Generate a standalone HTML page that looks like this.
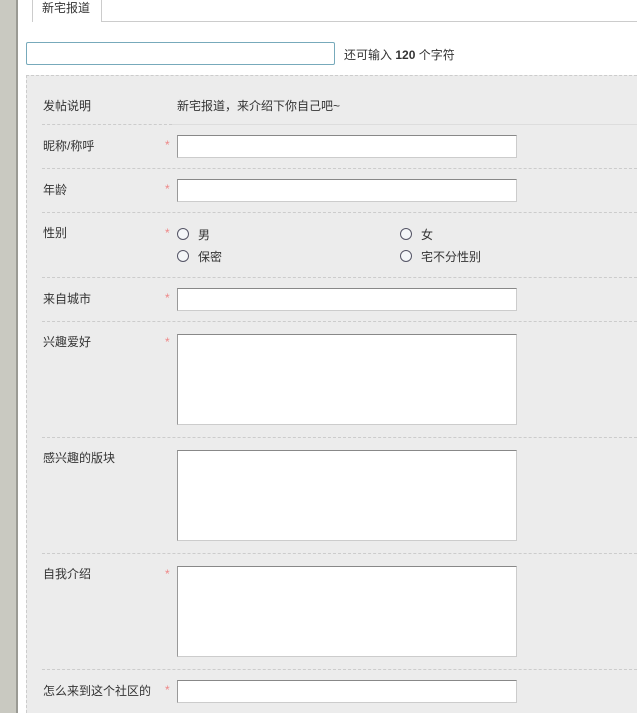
<!DOCTYPE html>
<html><head><meta charset="utf-8"><style>
body{margin:0;width:637px;height:713px;overflow:hidden;background:#fff;font:12px "Liberation Sans","Noto Sans CJK SC",sans-serif;color:#333;position:relative}
.a{position:absolute}
.lab{position:absolute;left:43px}
.star{position:absolute;left:165px;color:#e88;font-size:12px}
.in{position:absolute;left:177px;width:338px;height:21px;background:#fff;border:1px solid #ccc;border-top-color:#888;border-left-color:#999}
.ta{position:absolute;left:177px;width:338px;height:89px;background:#fff;border:1px solid #ccc;border-top-color:#888;border-left-color:#999}
.sep{position:absolute;left:42px;right:0;border-top:1px dashed #ccc}
.r{position:absolute;width:10px;height:10px;border:1px solid #556;border-radius:50%;background:#f4f6f8}
</style></head><body>
<div class="a" style="left:0;top:0;width:16px;height:713px;background:#c9c9c1"></div>
<div class="a" style="left:16px;top:0;width:2px;height:713px;background:#9a9a94"></div>
<div class="a" style="left:101px;top:21px;right:0;border-top:1px solid #ccc"></div>
<div class="a" style="left:32px;top:0;width:68px;height:22px;border:1px solid #ccc;border-top:none;border-bottom:none;background:#fff"></div>
<div class="a" style="left:42px;top:-1px">新宅报道</div>
<div class="a" style="left:26px;top:42px;width:307px;height:21px;border:1px solid #7ab;border-radius:2px;background:#fff"></div>
<div class="a" style="left:344px;top:46px">还可输入 <b>120</b> 个字符</div>
<div class="a" style="left:26px;top:75px;right:0;bottom:0;background:#ececec;border-top:1px dashed #ccc;border-left:1px dashed #ccc"></div>
<div class="lab" style="top:97px">发帖说明</div>
<div class="a" style="left:177px;top:97px">新宅报道，来介绍下你自己吧~</div>
<div class="a" style="left:42px;top:124px;width:130px;border-top:1px dashed #ccc"></div>
<div class="a" style="left:172px;top:124px;right:0;border-top:1px solid #ddd"></div>
<div class="lab" style="top:137px">昵称/称呼</div><div class="star" style="top:138px">*</div><div class="in" style="top:135px"></div>
<div class="sep" style="top:168px"></div>
<div class="lab" style="top:181px">年龄</div><div class="star" style="top:182px">*</div><div class="in" style="top:179px"></div>
<div class="sep" style="top:212px"></div>
<div class="lab" style="top:224px">性别</div><div class="star" style="top:226px">*</div>
<div class="r" style="left:177px;top:228px"></div><div class="a" style="left:198px;top:226px">男</div>
<div class="r" style="left:400px;top:228px"></div><div class="a" style="left:421px;top:226px">女</div>
<div class="r" style="left:177px;top:250px"></div><div class="a" style="left:198px;top:248px">保密</div>
<div class="r" style="left:400px;top:250px"></div><div class="a" style="left:421px;top:248px">宅不分性别</div>
<div class="sep" style="top:277px"></div>
<div class="lab" style="top:290px">来自城市</div><div class="star" style="top:291px">*</div><div class="in" style="top:288px"></div>
<div class="sep" style="top:321px"></div>
<div class="lab" style="top:333px">兴趣爱好</div><div class="star" style="top:335px">*</div><div class="ta" style="top:334px"></div>
<div class="sep" style="top:437px"></div>
<div class="lab" style="top:449px">感兴趣的版块</div><div class="ta" style="top:450px"></div>
<div class="sep" style="top:553px"></div>
<div class="lab" style="top:565px">自我介绍</div><div class="star" style="top:567px">*</div><div class="ta" style="top:566px"></div>
<div class="sep" style="top:669px"></div>
<div class="lab" style="top:682px">怎么来到这个社区的</div><div class="star" style="top:683px">*</div><div class="in" style="top:680px"></div>
</body></html>
